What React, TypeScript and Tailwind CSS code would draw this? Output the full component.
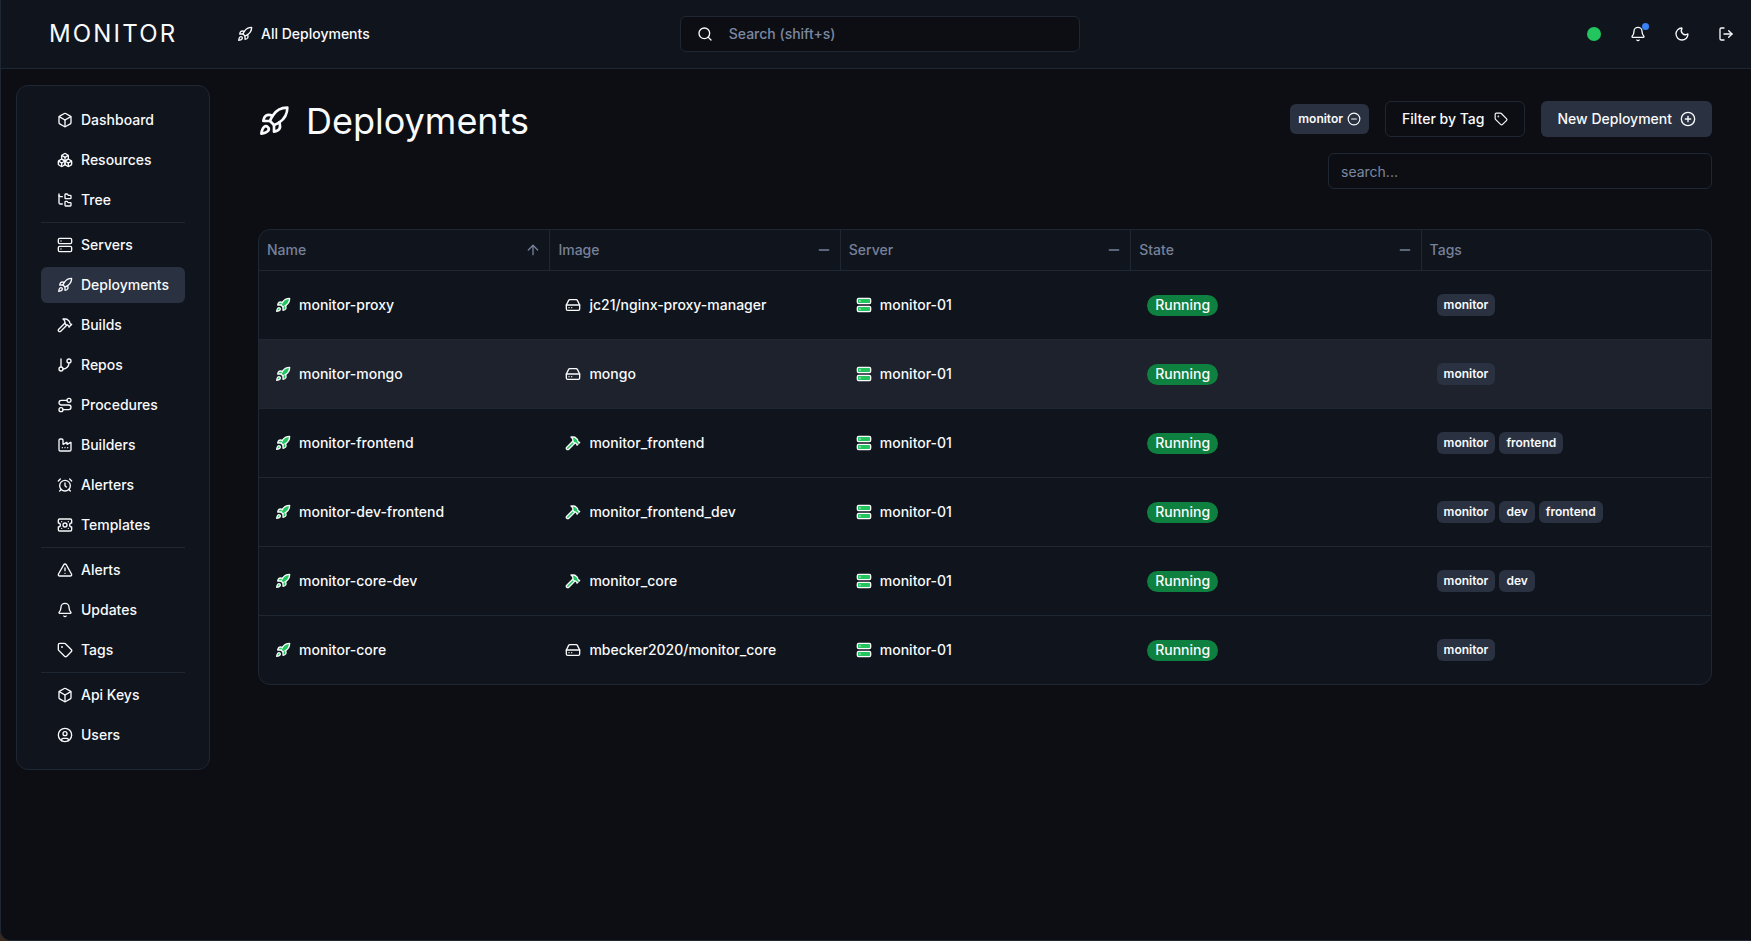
import {
  AlarmClock,
  AlertTriangle,
  ArrowUp,
  Bell,
  Box,
  Boxes,
  CircleUser,
  Factory,
  FolderTree,
  GitBranch,
  Hammer,
  HardDrive,
  LogOut,
  Minus,
  MinusCircle,
  Moon,
  PlusCircle,
  Rocket,
  Route,
  Search,
  Server,
  Tag,
} from 'lucide-react';

function TemplatesIcon({ className }: { className?: string }) {
  return (
    <svg
      viewBox="0 0 24 24"
      fill="none"
      stroke="currentColor"
      strokeWidth="2"
      strokeLinecap="round"
      strokeLinejoin="round"
      className={className}
    >
      <path d="M4 3h16a2 2 0 0 1 2 2v4a3 3 0 0 0 0 6v4a2 2 0 0 1-2 2H4a2 2 0 0 1-2-2v-4a3 3 0 0 0 0-6V5a2 2 0 0 1 2-2z" />
      <circle cx="12" cy="12" r="3" />
      <path d="M7 7h.01M17 7h.01M7 17h.01M17 17h.01" />
    </svg>
  );
}

const navGroups = [
  [
    { label: 'Dashboard', icon: Box },
    { label: 'Resources', icon: Boxes },
    { label: 'Tree', icon: FolderTree },
  ],
  [
    { label: 'Servers', icon: Server },
    { label: 'Deployments', icon: Rocket, active: true },
    { label: 'Builds', icon: Hammer },
    { label: 'Repos', icon: GitBranch },
    { label: 'Procedures', icon: Route },
    { label: 'Builders', icon: Factory },
    { label: 'Alerters', icon: AlarmClock },
    { label: 'Templates', icon: TemplatesIcon },
  ],
  [
    { label: 'Alerts', icon: AlertTriangle },
    { label: 'Updates', icon: Bell },
    { label: 'Tags', icon: Tag },
  ],
  [
    { label: 'Api Keys', icon: Box },
    { label: 'Users', icon: CircleUser },
  ],
];

const rows = [
  { name: 'monitor-proxy', image: 'jc21/nginx-proxy-manager', built: false, tags: ['monitor'] },
  { name: 'monitor-mongo', image: 'mongo', built: false, tags: ['monitor'], hover: true },
  { name: 'monitor-frontend', image: 'monitor_frontend', built: true, tags: ['monitor', 'frontend'] },
  { name: 'monitor-dev-frontend', image: 'monitor_frontend_dev', built: true, tags: ['monitor', 'dev', 'frontend'] },
  { name: 'monitor-core-dev', image: 'monitor_core', built: true, tags: ['monitor', 'dev'] },
  { name: 'monitor-core', image: 'mbecker2020/monitor_core', built: false, tags: ['monitor'] },
];

const columns = ['Name', 'Image', 'Server', 'State', 'Tags'];

function Topbar() {
  return (
    <header className="h-[69px] shrink-0 flex items-center border-b border-[#1f2733] bg-[#10141c]">
      <div className="w-[236px] pl-[48px] text-[24px] leading-none tracking-[0.09em] text-[#f8fafc]">MONITOR</div>
      <div className="flex items-center gap-2 text-sm font-medium text-[#f8fafc]">
        <Rocket className="w-4 h-4" />
        All Deployments
      </div>
      <div className="ml-[310px] w-[400px] h-9 flex items-center gap-4 px-4 rounded-md border border-[#1f2733] bg-[#0c0e13] text-sm font-medium text-[#7c88a1]">
        <Search className="w-4 h-4 text-[#f8fafc]" />
        Search (shift+s)
      </div>
      <div className="ml-auto flex items-center gap-7 pr-[17px] text-[#f8fafc]">
        <div className="w-[14px] h-[14px] mr-px rounded-full bg-[#22c55e]" />
        <div className="relative">
          <Bell className="w-4 h-4" />
          <div className="absolute -top-[3px] -right-[3px] w-[7px] h-[7px] rounded-full bg-[#3b82f6]" />
        </div>
        <Moon className="w-4 h-4" />
        <LogOut className="w-4 h-4" />
      </div>
    </header>
  );
}

function Sidebar() {
  return (
    <aside className="w-[194px] shrink-0 self-start rounded-xl border border-[#1f2733] bg-[#10141c] py-[16px] px-6">
      {navGroups.map((group, i) => (
        <div key={i} className={i > 0 ? 'border-t border-[#1f2733] mt-[4px] pt-[4px]' : ''}>
          {group.map((item) => (
            <a
              key={item.label}
              href="/"
              className={
                'h-9 mb-1 last:mb-0 flex items-center gap-2 px-4 rounded-md text-sm font-medium text-[#f8fafc] ' +
                (item.active ? 'bg-[#2a3140]' : '')
              }
            >
              <item.icon className="w-4 h-4" />
              {item.label}
            </a>
          ))}
        </div>
      ))}
    </aside>
  );
}

function TagPill({ label }: { label: string }) {
  return (
    <span className="h-[22px] px-[7px] flex items-center rounded-md bg-[#2a3140] text-xs font-semibold text-[#f8fafc]">
      {label}
    </span>
  );
}

function DeploymentsTable() {
  return (
    <div className="mt-[40px] rounded-xl border border-[#1f2733] bg-[#10141c] overflow-hidden">
      <div className="grid grid-cols-5 h-[41px] border-b border-[#1f2733]">
        {columns.map((col, i) => (
          <div
            key={col}
            className={
              'flex items-center justify-between px-2 text-sm font-medium text-[#76819a] ' +
              (i > 0 ? 'border-l border-[#1f2733]' : '')
            }
          >
            {col}
            {i === 0 && <ArrowUp className="w-4 h-4" />}
            {i > 0 && i < 4 && <Minus className="w-4 h-4" />}
          </div>
        ))}
      </div>
      {rows.map((row, i) => (
        <div
          key={row.name}
          className={
            'grid grid-cols-5 text-sm font-medium text-[#f8fafc] ' +
            (i > 0 ? 'h-[69px] border-t border-[#1f2733] ' : 'h-[68px] ') +
            (row.hover ? 'bg-[#1e222c]' : '')
          }
        >
          <div className="flex items-center gap-2 px-4">
            <Rocket className="w-4 h-4 fill-[#22c55e]" />
            {row.name}
          </div>
          <div className="flex items-center gap-2 px-4">
            {row.built ? (
              <Hammer className="w-4 h-4 fill-[#22c55e]" />
            ) : (
              <HardDrive className="w-4 h-4" />
            )}
            {row.image}
          </div>
          <div className="flex items-center gap-2 px-4">
            <Server className="w-4 h-4 fill-[#22c55e]" />
            monitor-01
          </div>
          <div className="flex items-center px-[17px]">
            <span className="h-[21px] px-2 flex items-center rounded-full bg-[#0e8040]">Running</span>
          </div>
          <div className="flex items-center gap-1 px-4">
            {row.tags.map((tag) => (
              <TagPill key={tag} label={tag} />
            ))}
          </div>
        </div>
      ))}
    </div>
  );
}

export default function App() {
  return (
    <div className="bg-[#3a2a1e]" style={{ fontFamily: 'Inter, sans-serif' }}>
      <div className="min-h-screen flex flex-col overflow-hidden bg-[#0c0e13] border-l border-b border-[#1f2733] rounded-bl-[10px]">
        <Topbar />
        <div className="flex pl-[15px] pt-[16px] pr-[39px]">
          <Sidebar />
          <main className="flex-1 ml-[48px] pt-[16px]">
            <div className="flex justify-between">
              <div className="flex items-center gap-4 h-[40px] text-[36px] text-[#f8fafc]">
                <Rocket className="w-8 h-8" />
                Deployments
              </div>
              <div className="flex flex-col items-end gap-4">
                <div className="flex items-center gap-4">
                  <div className="h-[30px] px-2 flex items-center gap-1 rounded-md bg-[#2a3140] text-xs font-semibold text-[#f8fafc]">
                    monitor
                    <MinusCircle className="w-3.5 h-3.5" />
                  </div>
                  <div className="h-9 px-4 flex items-center gap-[10px] rounded-md border border-[#1f2733] text-sm font-medium text-[#f8fafc]">
                    Filter by Tag
                    <Tag className="w-3.5 h-3.5" />
                  </div>
                  <div className="h-9 px-4 flex items-center gap-2 rounded-md bg-[#2a3140] text-sm font-medium text-[#f8fafc]">
                    New Deployment
                    <PlusCircle className="w-4 h-4" />
                  </div>
                </div>
                <input
                  placeholder="search..."
                  className="w-[384px] h-9 px-3 rounded-md border border-[#1f2733] bg-transparent text-sm placeholder:text-[#7c88a1]"
                />
              </div>
            </div>
            <DeploymentsTable />
          </main>
        </div>
      </div>
    </div>
  );
}
